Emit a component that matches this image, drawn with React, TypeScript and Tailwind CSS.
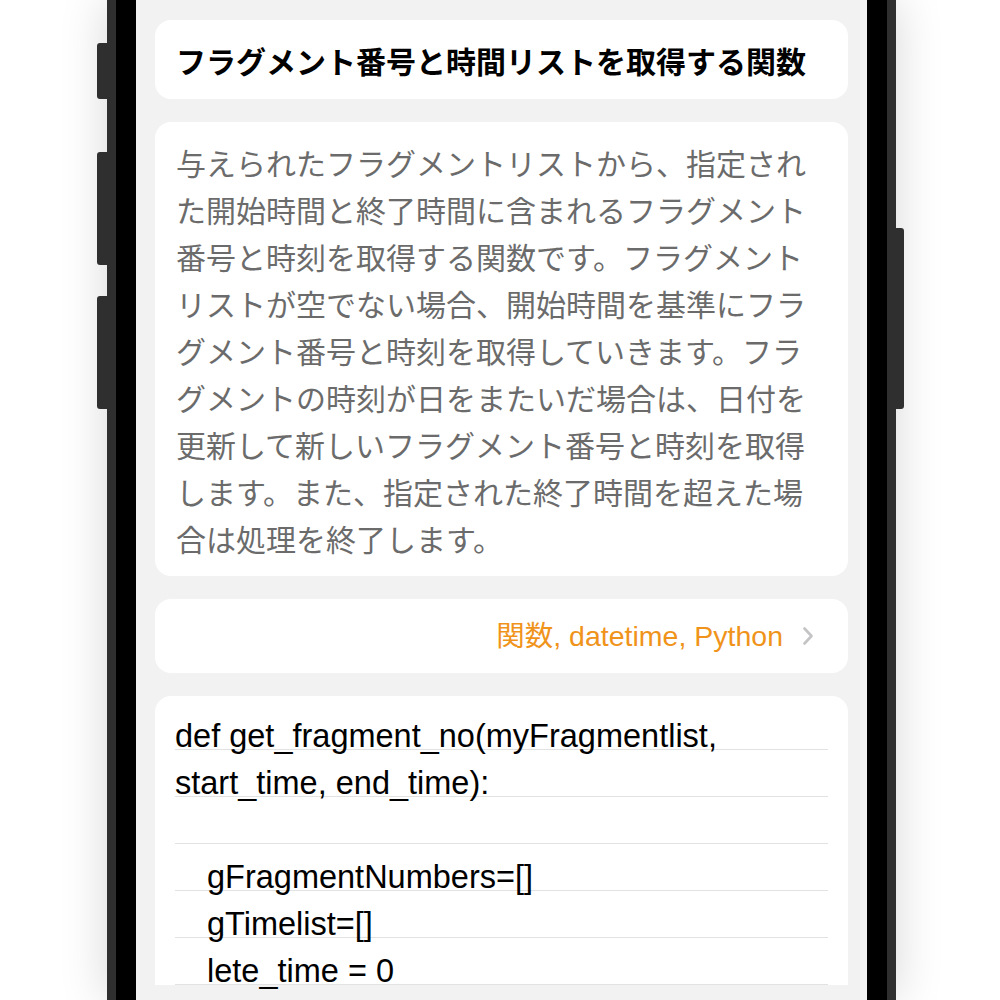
const jp = "font-['Noto_Sans_CJK_JP',sans-serif]";

const codeLines = [
  { text: "def get_fragment_no(myFragmentlist,", indent: false },
  { text: "start_time, end_time):", indent: false },
  { text: "", indent: false },
  { text: "gFragmentNumbers=[]", indent: true },
  { text: "gTimelist=[]", indent: true },
  { text: "lete_time = 0", indent: true },
];

const description =
  "与えられたフラグメントリストから、指定された開始時間と終了時間に含まれるフラグメント番号と時刻を取得する関数です。フラグメントリストが空でない場合、開始時間を基準にフラグメント番号と時刻を取得していきます。フラグメントの時刻が日をまたいだ場合は、日付を更新して新しいフラグメント番号と時刻を取得します。また、指定された終了時間を超えた場合は処理を終了します。";

function Chevron() {
  return (
    <svg width="12" height="20" viewBox="0 0 12 20" fill="none" className="shrink-0">
      <path
        d="M2.5 2.5 L9.5 10 L2.5 17.5"
        stroke="#c4c4c6"
        strokeWidth="2.6"
        strokeLinecap="round"
        strokeLinejoin="round"
      />
    </svg>
  );
}

export default function App() {
  return (
    <div className="h-[1000px] w-[1000px] overflow-hidden bg-white">
      <div className="relative ml-[107px] h-[1000px] w-[789px] bg-[#2f2f2f] px-[9px] shadow-[0_0_45px_rgba(0,0,0,0.16)]">
        {/* side buttons */}
        <div className="absolute left-[-10px] top-[43px] h-[56px] w-[10px] rounded-l-[3px] bg-[#2f2f2f]" />
        <div className="absolute left-[-10px] top-[152px] h-[113px] w-[10px] rounded-l-[3px] bg-[#2f2f2f]" />
        <div className="absolute left-[-10px] top-[296px] h-[113px] w-[10px] rounded-l-[3px] bg-[#2f2f2f]" />
        <div className="absolute right-[-8px] top-[228px] h-[181px] w-[8px] rounded-r-[3px] bg-[#2f2f2f]" />

        <div className="h-full bg-black px-[20px]">
          <div className="flex h-full flex-col gap-[23px] bg-[#f2f2f2] px-[19px] pt-[20px]">
            {/* title */}
            <div className="flex h-[79px] items-center rounded-[16px] bg-white px-[21px]">
              <h1 className={`${jp} text-[30px] font-bold leading-none text-black`}>
                フラグメント番号と時間リストを取得する関数
              </h1>
            </div>

            {/* description */}
            <div className="rounded-[16px] bg-white px-[21px] pb-[14px] pt-[17px]">
              <p className={`${jp} text-[30px] leading-[47px] text-[#6b6b6b]`}>
                {description}
              </p>
            </div>

            {/* tags */}
            <div className="flex h-[74px] items-center justify-end gap-[19px] rounded-[16px] bg-white pr-[34px]">
              <span className="font-['Liberation_Sans','Noto_Sans_CJK_JP',sans-serif] text-[28.5px] text-[#f0931a]">
                関数, datetime, Python
              </span>
              <Chevron />
            </div>

            {/* code */}
            <div className="rounded-t-[16px] bg-white px-[20px] pt-[7px]">
              {codeLines.map((line, i) => (
                <div
                  key={i}
                  className={`flex h-[47px] items-end border-b border-[#e2e2e2] ${line.indent ? "pl-[32px]" : ""}`}
                >
                  <span className="whitespace-pre font-['Liberation_Sans',sans-serif] text-[32.5px] leading-[25px] text-black">
                    {line.text}
                  </span>
                </div>
              ))}
            </div>
          </div>
        </div>
      </div>
    </div>
  );
}
